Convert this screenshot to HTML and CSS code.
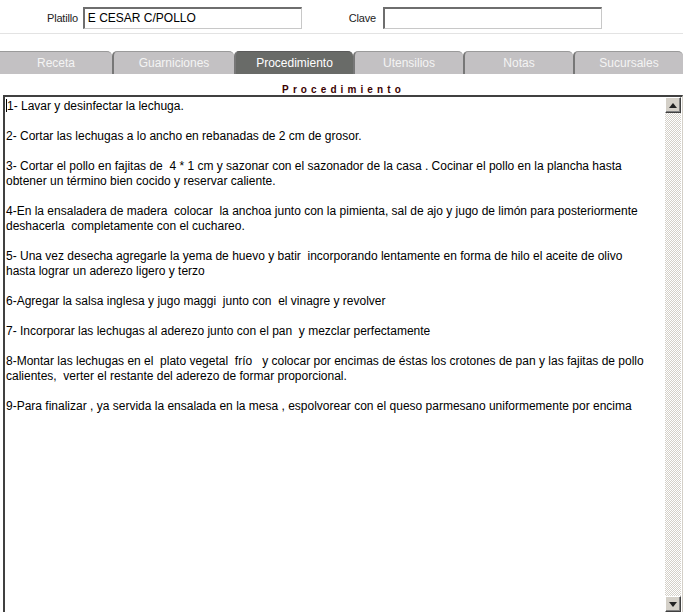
FILE: index.html
```html
<!DOCTYPE html>
<html lang="es">
<head>
<meta charset="utf-8">
<title>Procedimiento</title>
<link rel="stylesheet" href="styles.css">
</head>
<body>
<div class="header">
  <label class="field-label lbl-platillo">Platillo</label>
  <div class="field-input inp-platillo">E CESAR C/POLLO</div>
  <label class="field-label lbl-clave">Clave</label>
  <div class="field-input inp-clave"></div>
</div>
<div class="rule"></div>
<nav class="tabs">
  <div class="tab first">Receta</div>
  <div class="tab">Guarniciones</div>
  <div class="tab active">Procedimiento</div>
  <div class="tab">Utensilios</div>
  <div class="tab">Notas</div>
  <div class="tab">Sucursales</div>
</nav>
<h2 class="section-title">Procedimiento</h2>
<div class="memo">
  <div class="memo-text"><span class="caret"></span>1- Lavar y desinfectar la lechuga.

2- Cortar las lechugas a lo ancho en rebanadas de 2 cm de grosor.

3- Cortar el pollo en fajitas de  4 * 1 cm y sazonar con el sazonador de la casa . Cocinar el pollo en la plancha hasta
obtener un término bien cocido y reservar caliente.

4-En la ensaladera de madera  colocar  la anchoa junto con la pimienta, sal de ajo y jugo de limón para posteriormente
deshacerla  completamente con el cuchareo.

5- Una vez desecha agregarle la yema de huevo y batir  incorporando lentamente en forma de hilo el aceite de olivo
hasta lograr un aderezo ligero y terzo

6-Agregar la salsa inglesa y jugo maggi  junto con  el vinagre y revolver

7- Incorporar las lechugas al aderezo junto con el pan  y mezclar perfectamente

8-Montar las lechugas en el  plato vegetal  frío   y colocar por encimas de éstas los crotones de pan y las fajitas de pollo
calientes,  verter el restante del aderezo de formar proporcional.

9-Para finalizar , ya servida la ensalada en la mesa , espolvorear con el queso parmesano uniformemente por encima</div>
  <div class="scrollbar">
    <div class="sb-btn"><svg width="8" height="5" viewBox="0 0 8 5"><path d="M4 0L8 5H0Z" fill="#222"/></svg></div>
    <div class="sb-track"></div>
    <div class="sb-btn"><svg width="8" height="5" viewBox="0 0 8 5"><path d="M0 0H8L4 5Z" fill="#222"/></svg></div>
  </div>
</div>
</body>
</html>
```
FILE: styles.css
```css
html, body {
  margin: 0;
  padding: 0;
  background: #ffffff;
  overflow: hidden;
  height: 612px;
}
body {
  font-family: "Liberation Sans", Arial, sans-serif;
  font-size: 12px;
  color: #000;
}
.header {
  display: flex;
  align-items: center;
  height: 22px;
  padding-top: 7px;
}
.field-label {
  font-size: 11px;
  color: #222;
  letter-spacing: -0.2px;
}
.lbl-platillo { margin-left: 47px; margin-right: 5px; }
.lbl-clave { margin-left: 47px; margin-right: 7px; }
.field-input {
  box-sizing: border-box;
  width: 219px;
  height: 22px;
  border-style: solid;
  border-width: 2px 1px 1px 2px;
  border-color: #6e6e6e #c8c8c8 #c8c8c8 #6e6e6e;
  font-size: 12px;
  line-height: 18px;
  padding-left: 3px;
  color: #000;
}
.rule {
  margin-top: 4px;
  height: 1px;
  background: #e3e3e3;
}
.tabs {
  display: grid;
  grid-template-columns: 112px 122px 119px 110px 110px 1fr;
  margin-top: 17px;
  height: 23px;
}
.tab {
  box-sizing: border-box;
  background: #c3c1c3;
  color: #f4f4f4;
  font-size: 12px;
  line-height: 22px;
  text-align: center;
  border-left: 2px solid #777777;
  border-top: 1px solid #9a9a9a;
  border-radius: 5px 5px 0 0;
}
.tab.first {
  border-left: none;
  border-top-left-radius: 0;
}
.tab.active {
  background: #696b68;
  color: #ffffff;
  border-top-color: #5a5a5a;
}
.section-title {
  margin: 10px 0 0 0;
  font-size: 10px;
  font-weight: bold;
  letter-spacing: 4.1px;
  color: #3a0000;
  text-align: center;
  line-height: 12px;
  height: 11px;
  padding-left: 4px;
}
.memo {
  box-sizing: border-box;
  display: flex;
  margin-left: 3px;
  width: 680px;
  height: 518px;
  border-style: solid;
  border-width: 2px 1px 1px 2px;
  border-color: #404040 #d4d0c8 #d4d0c8 #404040;
}
.memo-text {
  flex: 1;
  white-space: pre;
  font-size: 12px;
  line-height: 15px;
  padding: 2px 0 0 1px;
  color: #000;
  overflow: hidden;
}
.caret {
  display: inline-block;
  width: 1px;
  height: 13px;
  background: #000;
  vertical-align: -2px;
}
.scrollbar {
  display: flex;
  flex-direction: column;
  width: 16px;
  margin-right: 1px;
}
.sb-btn {
  box-sizing: border-box;
  width: 16px;
  height: 16px;
  background: #d4d0c8;
  border-style: solid;
  border-width: 1px;
  border-color: #ffffff #404040 #404040 #ffffff;
  box-shadow: inset -1px -1px 0 #808080;
  display: flex;
  align-items: center;
  justify-content: center;
}
.sb-track {
  flex: 1;
  background-color: #ffffff;
  background-image: repeating-conic-gradient(#d4d0c8 0 25%, #ffffff 0 50%);
  background-size: 2px 2px;
}
```
